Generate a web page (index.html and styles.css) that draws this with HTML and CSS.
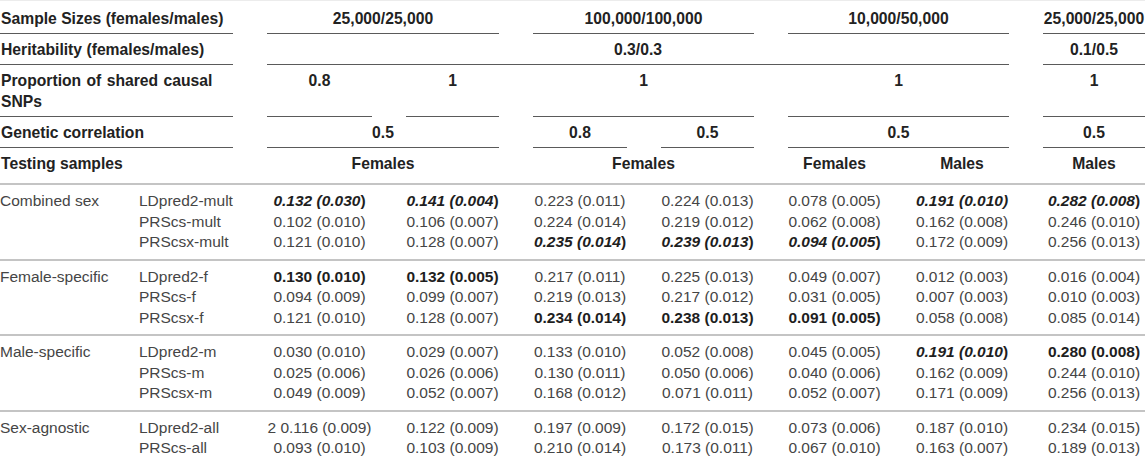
FILE: index.html
```html
<!DOCTYPE html>
<html lang="en">
<head>
<meta charset="utf-8">
<title>PRS results table</title>
<link rel="stylesheet" href="styles.css">
</head>
<body>
<div class="table">
  <div class="hrow">
    <div class="hc lbl ln">Sample Sizes (females/males)</div>
    <div class="hc c1-2 ln">25,000/25,000</div>
    <div class="hc c3-4 ln">100,000/100,000</div>
    <div class="hc c5-6 ln">10,000/50,000</div>
    <div class="hc c7 ln">25,000/25,000</div>
  </div>
  <div class="hrow">
    <div class="hc lbl ln">Heritability (females/males)</div>
    <div class="hc c1-6 ln">0.3/0.3</div>
    <div class="hc c7 ln">0.1/0.5</div>
  </div>
  <div class="hrow">
    <div class="hc lbl ln wrap">Proportion of shared causal SNPs</div>
    <div class="hc c1 ln">0.8</div>
    <div class="hc c2 ln">1</div>
    <div class="hc c3-4 ln">1</div>
    <div class="hc c5-6 ln">1</div>
    <div class="hc c7 ln">1</div>
  </div>
  <div class="hrow">
    <div class="hc lbl ln">Genetic correlation</div>
    <div class="hc c1-2 ln">0.5</div>
    <div class="hc c3 ln">0.8</div>
    <div class="hc c4 ln">0.5</div>
    <div class="hc c5-6 ln">0.5</div>
    <div class="hc c7 ln">0.5</div>
  </div>
  <div class="hrow last">
    <div class="hc lbl">Testing samples</div>
    <div class="hc c1-2">Females</div>
    <div class="hc c3-4">Females</div>
    <div class="hc c5">Females</div>
    <div class="hc c6">Males</div>
    <div class="hc c7">Males</div>
  </div>

  <div class="group">
    <div class="g">Combined sex</div><div class="m">LDpred2-mult</div>
    <div class="v"><b><i>0.132 (0.030</i>)</b></div><div class="v"><b><i>0.141 (0.004</i>)</b></div><div class="v">0.223 (0.011)</div><div class="v">0.224 (0.013)</div><div class="v">0.078 (0.005)</div><div class="v"><b><i>0.191 (0.010)</i></b></div><div class="v"><b><i>0.282 (0.008</i>)</b></div>
    <div class="g"></div><div class="m">PRScs-mult</div>
    <div class="v">0.102 (0.010)</div><div class="v">0.106 (0.007)</div><div class="v">0.224 (0.014)</div><div class="v">0.219 (0.012)</div><div class="v">0.062 (0.008)</div><div class="v">0.162 (0.008)</div><div class="v">0.246 (0.010)</div>
    <div class="g"></div><div class="m">PRScsx-mult</div>
    <div class="v">0.121 (0.010)</div><div class="v">0.128 (0.007)</div><div class="v"><b><i>0.235 (0.014</i>)</b></div><div class="v"><b><i>0.239 (0.013</i>)</b></div><div class="v"><b><i>0.094 (0.005</i>)</b></div><div class="v">0.172 (0.009)</div><div class="v">0.256 (0.013)</div>
  </div>

  <div class="group">
    <div class="g">Female-specific</div><div class="m">LDpred2-f</div>
    <div class="v"><b>0.130 (0.010)</b></div><div class="v"><b>0.132 (0.005)</b></div><div class="v">0.217 (0.011)</div><div class="v">0.225 (0.013)</div><div class="v">0.049 (0.007)</div><div class="v">0.012 (0.003)</div><div class="v">0.016 (0.004)</div>
    <div class="g"></div><div class="m">PRScs-f</div>
    <div class="v">0.094 (0.009)</div><div class="v">0.099 (0.007)</div><div class="v">0.219 (0.013)</div><div class="v">0.217 (0.012)</div><div class="v">0.031 (0.005)</div><div class="v">0.007 (0.003)</div><div class="v">0.010 (0.003)</div>
    <div class="g"></div><div class="m">PRScsx-f</div>
    <div class="v">0.121 (0.010)</div><div class="v">0.128 (0.007)</div><div class="v"><b>0.234 (0.014)</b></div><div class="v"><b>0.238 (0.013)</b></div><div class="v"><b>0.091 (0.005)</b></div><div class="v">0.058 (0.008)</div><div class="v">0.085 (0.014)</div>
  </div>

  <div class="group">
    <div class="g">Male-specific</div><div class="m">LDpred2-m</div>
    <div class="v">0.030 (0.010)</div><div class="v">0.029 (0.007)</div><div class="v">0.133 (0.010)</div><div class="v">0.052 (0.008)</div><div class="v">0.045 (0.005)</div><div class="v"><b><i>0.191 (0.010</i>)</b></div><div class="v"><b>0.280 (0.008)</b></div>
    <div class="g"></div><div class="m">PRScs-m</div>
    <div class="v">0.025 (0.006)</div><div class="v">0.026 (0.006)</div><div class="v">0.130 (0.011)</div><div class="v">0.050 (0.006)</div><div class="v">0.040 (0.006)</div><div class="v">0.162 (0.009)</div><div class="v">0.244 (0.010)</div>
    <div class="g"></div><div class="m">PRScsx-m</div>
    <div class="v">0.049 (0.009)</div><div class="v">0.052 (0.007)</div><div class="v">0.168 (0.012)</div><div class="v">0.071 (0.011)</div><div class="v">0.052 (0.007)</div><div class="v">0.171 (0.009)</div><div class="v">0.256 (0.013)</div>
  </div>

  <div class="group">
    <div class="g">Sex-agnostic</div><div class="m">LDpred2-all</div>
    <div class="v">2 0.116 (0.009)</div><div class="v">0.122 (0.009)</div><div class="v">0.197 (0.009)</div><div class="v">0.172 (0.015)</div><div class="v">0.073 (0.006)</div><div class="v">0.187 (0.010)</div><div class="v">0.234 (0.015)</div>
    <div class="g"></div><div class="m">PRScs-all</div>
    <div class="v">0.093 (0.010)</div><div class="v">0.103 (0.009)</div><div class="v">0.210 (0.014)</div><div class="v">0.173 (0.011)</div><div class="v">0.067 (0.010)</div><div class="v">0.163 (0.007)</div><div class="v">0.189 (0.013)</div>
  </div>
</div>
</body>
</html>
```

FILE: styles.css
```css
html, body {
  margin: 0;
  padding: 0;
  background: #ffffff;
}

body {
  font-family: "Liberation Sans", Arial, Helvetica, sans-serif;
  width: 1145px;
  height: 467px;
  overflow: hidden;
}

.table {
  --cols: 105px 94px 105px 93px 94px 93px 93px 94px 102px;
  border-top: 1px solid #ececec;
  padding-top: 2px;
}

.hrow {
  display: grid;
  grid-template-columns: var(--cols);
  column-gap: 34px;
  font-size: 15.7px;
  font-weight: bold;
  color: #222222;
  line-height: 20.5px;
}

.hc {
  padding: 6px 0 3.5px;
  text-align: center;
  white-space: nowrap;
}

.hrow.last .hc {
  padding-bottom: 9px;
}

.hc.ln {
  border-bottom: 1px solid #5a5a5a;
}

.hc.lbl {
  grid-column: 1 / 3;
  text-align: left;
  padding-left: 1px;
}

.hc.wrap {
  white-space: normal;
  word-spacing: 1px;
}

.c1 { grid-column: 3 / 4; }
.c2 { grid-column: 4 / 5; }
.c3 { grid-column: 5 / 6; }
.c4 { grid-column: 6 / 7; }
.c5 { grid-column: 7 / 8; }
.c6 { grid-column: 8 / 9; }
.c7 { grid-column: 9 / 10; }
.c1-2 { grid-column: 3 / 5; }
.c3-4 { grid-column: 5 / 7; }
.c5-6 { grid-column: 7 / 9; }
.c1-6 { grid-column: 3 / 9; }

.group {
  display: grid;
  grid-template-columns: var(--cols);
  column-gap: 34px;
  border-top: 2px solid #c4c4c4;
  padding: 6px 0;
  font-size: 15.5px;
  line-height: 20.5px;
  color: #454545;
}

.g {
  white-space: nowrap;
}

.m {
  white-space: nowrap;
}

.v {
  text-align: center;
  white-space: nowrap;
}

.v b {
  color: #1e1e1e;
}
```
